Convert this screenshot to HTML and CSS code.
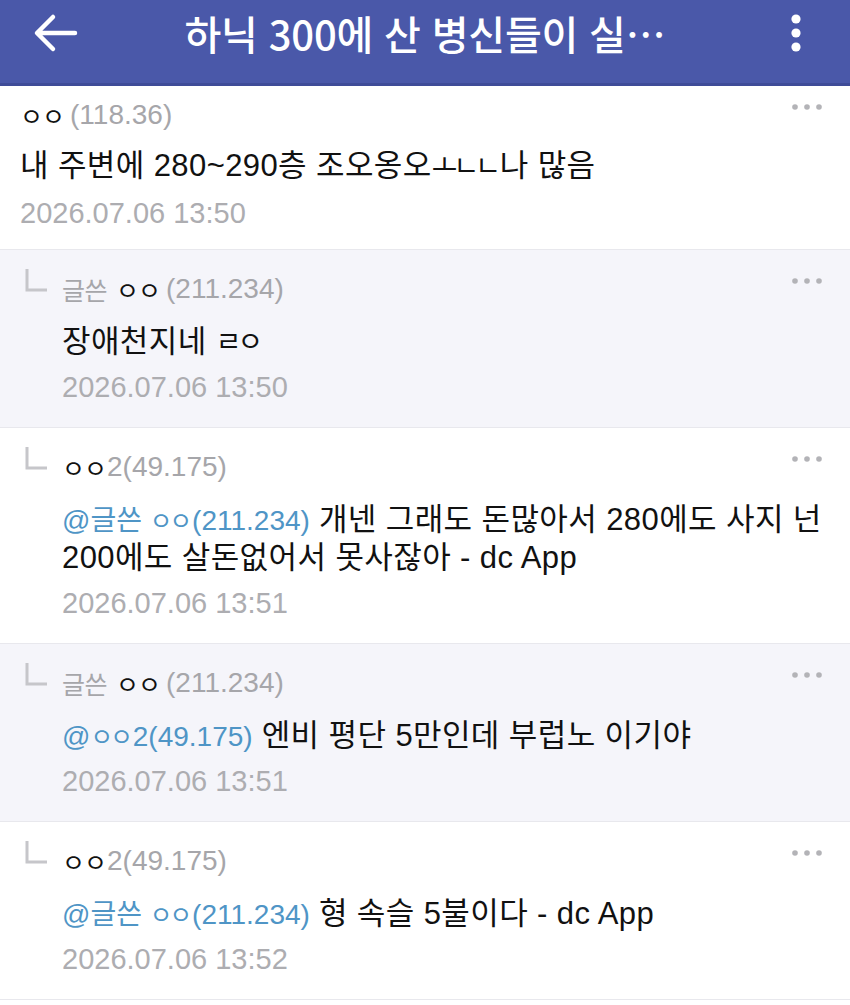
FILE: index.html
```html
<!DOCTYPE html>
<html lang="ko">
<head>
<meta charset="utf-8">
<title>댓글</title>
<link rel="stylesheet" href="styles.css">
</head>
<body>
<header class="topbar">
  <div class="side side-left">
    <svg class="back" width="50" height="40" viewBox="0 0 50 40">
      <path d="M8 20 H45 M23 4 L7 20 L23 36" fill="none" stroke="#fff" stroke-width="4.5" stroke-linecap="round" stroke-linejoin="round"/>
    </svg>
  </div>
  <h1 class="title">하닉 300에 산 병신들이 실…</h1>
  <div class="side side-right">
    <svg class="more" width="12" height="40" viewBox="0 0 12 40">
      <circle cx="6" cy="6" r="4.6" fill="#fff"/>
      <circle cx="6" cy="20" r="4.6" fill="#fff"/>
      <circle cx="6" cy="34" r="4.6" fill="#fff"/>
    </svg>
  </div>
</header>

<ul class="comments">
  <li class="comment top">
    <div class="body">
      <div class="meta"><span class="nick">ㅇㅇ</span><span class="ip">(118.36)</span>
        <svg class="dots" width="34" height="36" viewBox="0 0 34 36"><circle cx="5" cy="10" r="2.8"/><circle cx="17" cy="10" r="2.8"/><circle cx="29" cy="10" r="2.8"/></svg>
      </div>
      <p class="text">내 주변에 280~290층 조오옹오<span class="jamo">ㅗㄴㄴ</span>나 많음</p>
      <div class="date">2026.07.06 13:50</div>
    </div>
  </li>

  <li class="comment reply author">
    <svg class="reply-icon" width="24" height="24" viewBox="0 0 24 24"><path d="M2 0 V21 H22" fill="none" stroke="#c6c6ca" stroke-width="3"/></svg>
    <div class="body">
      <div class="meta"><span class="badge">글쓴</span><span class="nick">ㅇㅇ</span><span class="ip">(211.234)</span>
        <svg class="dots" width="34" height="36" viewBox="0 0 34 36"><circle cx="5" cy="10" r="2.8"/><circle cx="17" cy="10" r="2.8"/><circle cx="29" cy="10" r="2.8"/></svg>
      </div>
      <p class="text">장애천지네 <span class="jamo">ㄹㅇ</span></p>
      <div class="date">2026.07.06 13:50</div>
    </div>
  </li>

  <li class="comment reply">
    <svg class="reply-icon" width="24" height="24" viewBox="0 0 24 24"><path d="M2 0 V21 H22" fill="none" stroke="#c6c6ca" stroke-width="3"/></svg>
    <div class="body">
      <div class="meta"><span class="nick">ㅇㅇ</span><span class="ip ip-tight">2(49.175)</span>
        <svg class="dots" width="34" height="36" viewBox="0 0 34 36"><circle cx="5" cy="10" r="2.8"/><circle cx="17" cy="10" r="2.8"/><circle cx="29" cy="10" r="2.8"/></svg>
      </div>
      <p class="text"><span class="mention">@글쓴 <span class="jamo">ㅇㅇ</span>(211.234)</span> 개넨 그래도 돈많아서 280에도 사지 넌<br>200에도 살돈없어서 못사잖아 - dc App</p>
      <div class="date">2026.07.06 13:51</div>
    </div>
  </li>

  <li class="comment reply author">
    <svg class="reply-icon" width="24" height="24" viewBox="0 0 24 24"><path d="M2 0 V21 H22" fill="none" stroke="#c6c6ca" stroke-width="3"/></svg>
    <div class="body">
      <div class="meta"><span class="badge">글쓴</span><span class="nick">ㅇㅇ</span><span class="ip">(211.234)</span>
        <svg class="dots" width="34" height="36" viewBox="0 0 34 36"><circle cx="5" cy="10" r="2.8"/><circle cx="17" cy="10" r="2.8"/><circle cx="29" cy="10" r="2.8"/></svg>
      </div>
      <p class="text"><span class="mention">@<span class="jamo">ㅇㅇ</span>2(49.175)</span> 엔비 평단 5만인데 부럽노 이기야</p>
      <div class="date">2026.07.06 13:51</div>
    </div>
  </li>

  <li class="comment reply">
    <svg class="reply-icon" width="24" height="24" viewBox="0 0 24 24"><path d="M2 0 V21 H22" fill="none" stroke="#c6c6ca" stroke-width="3"/></svg>
    <div class="body">
      <div class="meta"><span class="nick">ㅇㅇ</span><span class="ip ip-tight">2(49.175)</span>
        <svg class="dots" width="34" height="36" viewBox="0 0 34 36"><circle cx="5" cy="10" r="2.8"/><circle cx="17" cy="10" r="2.8"/><circle cx="29" cy="10" r="2.8"/></svg>
      </div>
      <p class="text"><span class="mention">@글쓴 <span class="jamo">ㅇㅇ</span>(211.234)</span> 형 속슬 5불이다 - dc App</p>
      <div class="date">2026.07.06 13:52</div>
    </div>
  </li>
</ul>
</body>
</html>
```

FILE: styles.css
```css
html, body {
  margin: 0;
  padding: 0;
  background: #ffffff;
}

body {
  width: 850px;
  font-family: "Liberation Sans", "Noto Sans CJK KR", sans-serif;
  color: #111111;
}

.topbar {
  height: 83px;
  background: #4a58a9;
  border-bottom: 3px solid #3f4c98;
  display: flex;
  align-items: flex-start;
  box-sizing: content-box;
}

.side {
  width: 120px;
  height: 66px;
  display: flex;
  align-items: center;
}

.side-left {
  padding-left: 30px;
  box-sizing: border-box;
}

.side-right {
  justify-content: flex-end;
  padding-right: 48px;
  box-sizing: border-box;
}

.title {
  flex: 1;
  margin: 0;
  height: 66px;
  line-height: 66px;
  text-align: center;
  color: #ffffff;
  font-size: 40px;
  font-weight: 500;
  font-family: "Noto Sans CJK KR", "Liberation Sans", sans-serif;
  letter-spacing: -0.2px;
  white-space: nowrap;
}

.comments {
  list-style: none;
  margin: 0;
  padding: 0;
}

.comment {
  display: grid;
  border-bottom: 1px solid #e8e8ed;
  background: #ffffff;
}

.comment.top {
  grid-template-columns: 1fr;
  padding: 11px 20px 18px 20px;
}

.comment.reply {
  grid-template-columns: 37px 1fr;
  padding: 21px 20px 22px 25px;
}

.comment.author {
  background: #f5f5fa;
}

.reply-icon {
  margin-top: -2px;
}

.meta {
  display: flex;
  align-items: flex-start;
  height: 36px;
  line-height: 36px;
  font-size: 28px;
}

.nick {
  color: #111111;
  font-family: "Noto Sans CJK KR", sans-serif;
  font-size: 25px;
  letter-spacing: -1px;
}

.badge {
  color: #a6a6aa;
  font-family: "Noto Sans CJK KR", sans-serif;
  font-size: 25px;
  margin-right: 9px;
  letter-spacing: -0.5px;
}

.ip {
  color: #a6a6aa;
  margin-left: 6px;
}

.ip-tight {
  margin-left: 1px;
}

.dots {
  margin-left: auto;
  margin-right: 6px;
  fill: #b3b3b7;
}

.text {
  margin: 14px 0 0 0;
  height: auto;
  font-size: 31px;
  line-height: 38px;
  letter-spacing: 0.4px;
  color: #111111;
  white-space: nowrap;
}

.reply .text {
  margin-top: 16px;
}

.jamo {
  font-size: 0.9em;
  line-height: 1;
  letter-spacing: -0.14em;
  margin-right: 0.1em;
}

.mention {
  color: #4f95c6;
  font-size: 28px;
  line-height: 1;
  letter-spacing: 0;
}

.mention .jamo {
  font-size: 0.88em;
  letter-spacing: -0.12em;
  margin-right: 0.12em;
}

.date {
  margin-top: 10px;
  font-size: 29px;
  line-height: 36px;
  color: #adadb1;
}

.reply .date {
  margin-top: 8px;
}
```
